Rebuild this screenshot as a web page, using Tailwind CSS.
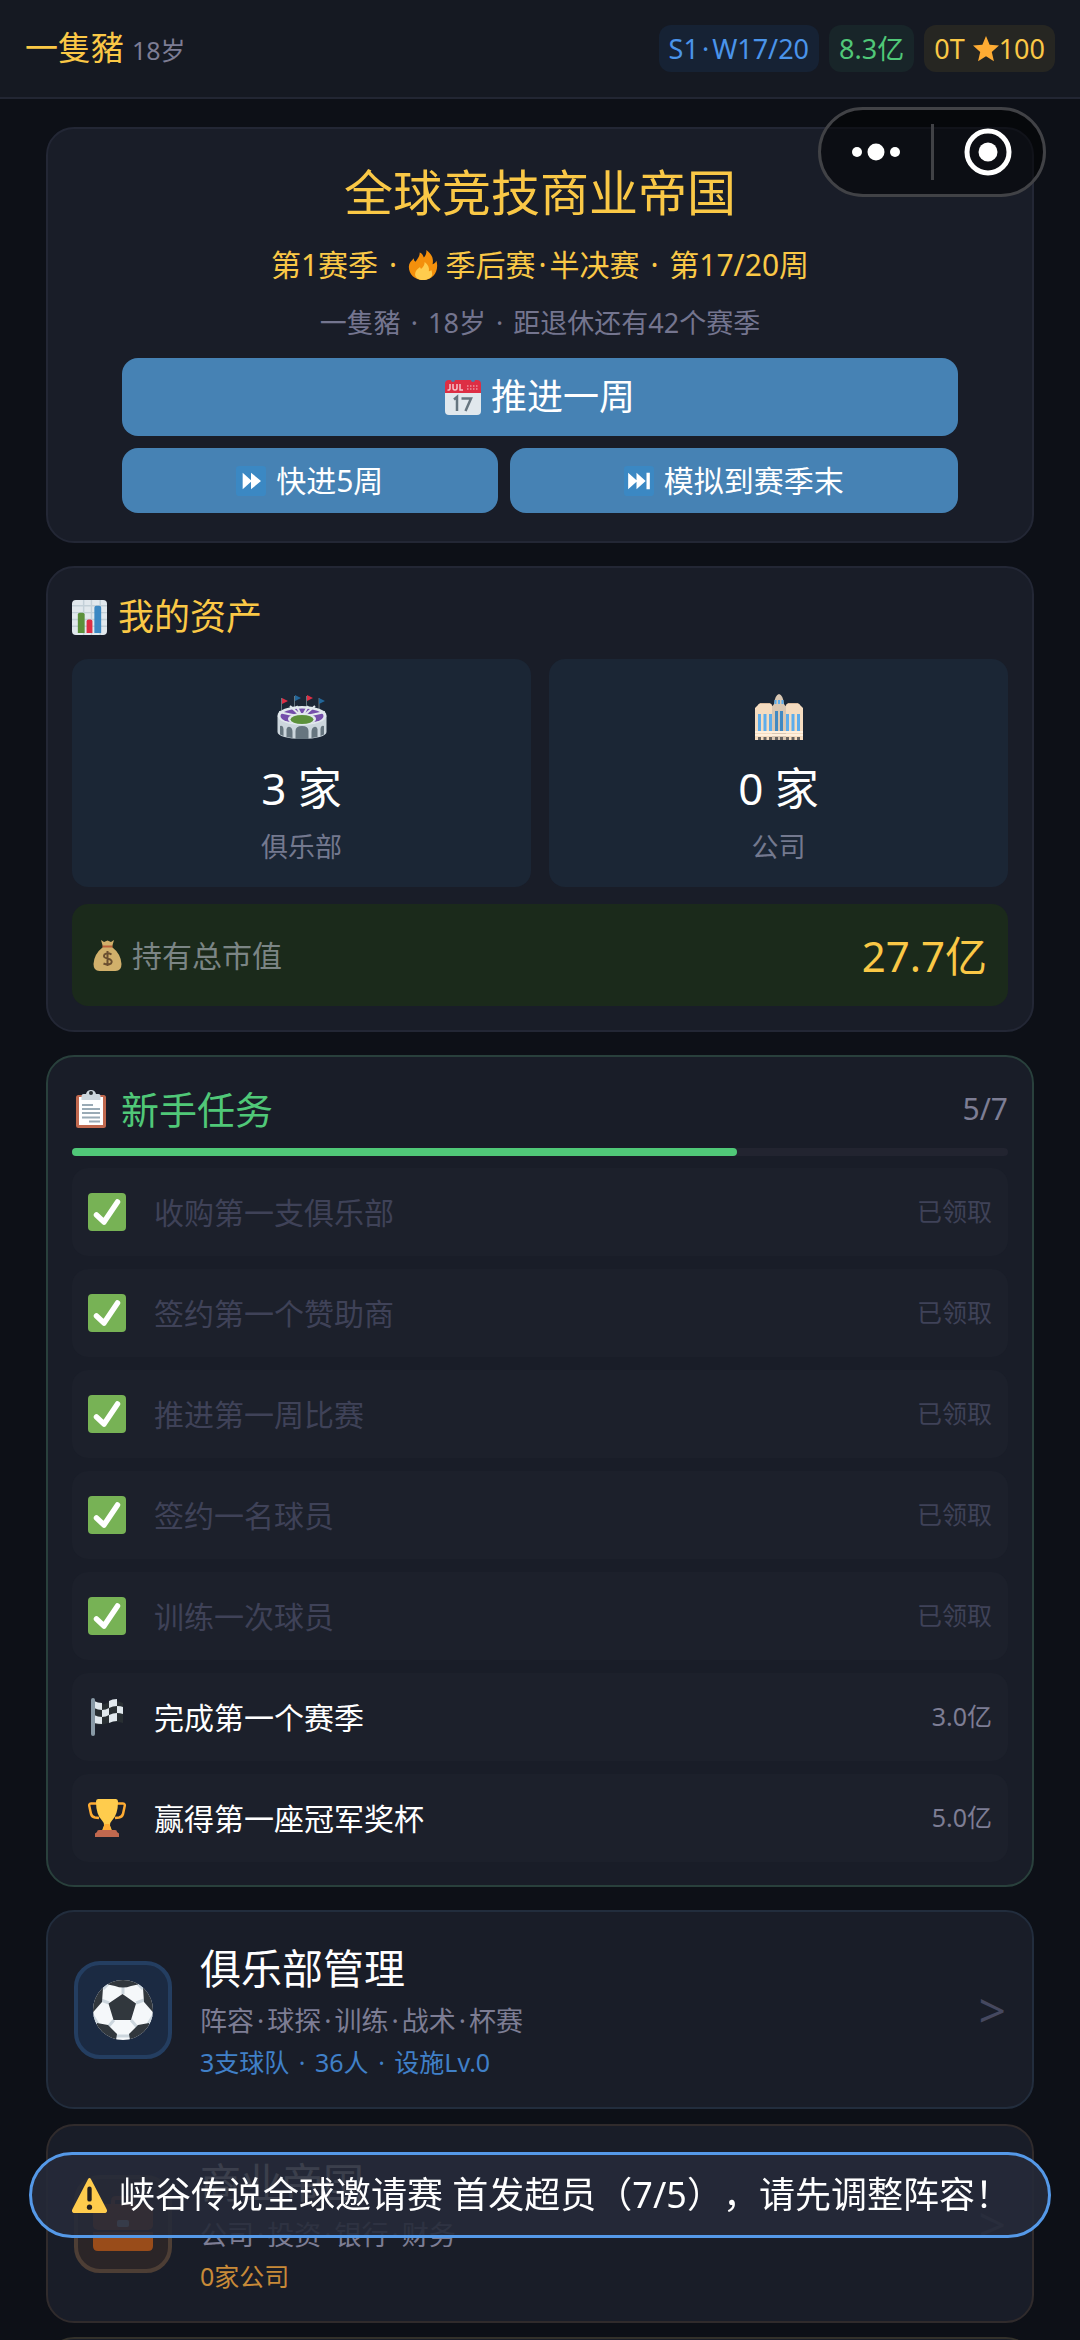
<!DOCTYPE html>
<html lang="zh-CN">

<head>
  <meta charset="UTF-8">
  <meta name="viewport" content="width=device-width, initial-scale=1.0">
  <script src="https://cdn.jsdelivr.net/npm/@tailwindcss/browser@4"></script>
  <title>全球竞技商业帝国</title>
</head>

<body class="h-screen overflow-hidden flex flex-col bg-[#0d1017] text-white font-['Noto_Sans','Noto_Sans_CJK_SC',sans-serif]">
  <!-- Shared icon -->
  <svg class="hidden">
    <symbol id="check" viewBox="0 0 38 38">
      <rect width="38" height="38" rx="4" fill="#77b255" />
      <path d="M8.500 22 L16 29 L29.500 9" fill="none" stroke="#fff" stroke-width="5.500" stroke-linecap="round" stroke-linejoin="round" />
    </symbol>
  </svg>

  <header class="flex shrink-0 items-center justify-between h-[99px] px-[25px] bg-[#151922] border-b-2 border-[#222633]">
    <div class="flex items-baseline gap-2">
      <span class="text-[33px] leading-[48px] text-[#fac846]">一隻豬</span>
      <span class="text-[25px] leading-[48px] text-[#7d7d94]">18岁</span>
    </div>
    <div class="flex gap-[10px] text-[27px] leading-[47px]">
      <span class="px-[10px] rounded-xl bg-[#162234] text-[#4a94ea]">S1<span class="mx-[3px]">·</span>W17/20</span>
      <span class="px-[10px] rounded-xl bg-[#182529] text-[#50c878]">8.3亿</span>
      <span class="flex items-center px-[10px] rounded-xl bg-[#262622] text-[#fac846]">0T
        <svg class="ml-2 size-[26px]" viewBox="0 0 36 36"><path fill="#ffac33" d="M18 0l5 12 13 1-10 9 3 13-11-7-11 7 3-13L0 13l13-1z" /></svg>100</span>
    </div>
  </header>

  <main class="px-[46px] pt-7">
    <section class="px-[74px] pt-[27px] pb-7 text-center bg-[#191d28] border-2 border-[#232735] rounded-[28px]">
      <h1 class="text-[49px] leading-[72px] text-[#fac846]">全球竞技商业帝国</h1>
      <p class="mt-[15px] text-[30px] leading-[44px] text-[#fac846]">第1赛季 <span class="mx-[3px]">·</span>
        <svg class="inline size-[30px] align-[-4px]" viewBox="0 0 36 36">
          <path fill="#f4900c" d="M35 19c0-2-.3-4-.9-6-1 2-2.600 3.600-4.600 4 1.500-7-1-12-7.500-17 .5 4-1 7-3 9-1-3-2.500-5-5-6 .3 4-2 7-5 11-1.500-.5-2-2-2-4-3 3-6 6-6 10 0 9 7 16 17 16s17-7 17-17z" />
          <path fill="#ffcc4d" d="M28 24c-1 1-2 1.500-3 1.500 1-4-1-8-5-11 0 4-2 6-4 8-1 0-1.500-1-1.500-2-3 2-6 5-6 8.500 0 4 4 7 9.500 7s11-3 11-7c0-2-.4-3.500-1-5z" />
        </svg>
        季后赛<span class="mx-[3px]">·</span>半决赛 <span class="mx-[3px]">·</span> 第17/20周</p>
      <p class="mt-[18px] text-[27px] leading-9 text-[#74758f]">一隻豬 <span class="mx-[3px]">·</span> 18岁 <span class="mx-[3px]">·</span> 距退休还有42个赛季</p>
      <button class="flex items-center justify-center gap-[10px] w-full h-[78px] mt-[17px] rounded-2xl bg-[#4682b4] text-[36px]">
        <svg class="size-9" viewBox="0 0 36 36">
          <path fill="#e1e8ed" d="M0 12h36v20a4 4 0 0 1-4 4H4a4 4 0 0 1-4-4z" />
          <path fill="#dd2e44" d="M0 14V5a4 4 0 0 1 4-4h2a2 2 0 0 0 4 0h16a2 2 0 0 0 4 0h2a4 4 0 0 1 4 4v9z" />
          <path fill="none" stroke="#f5c4cb" stroke-width="1.500" d="M5 5v4.500q0 2-2.500 1.500M8 5v4q0 2 2 2t2-2v-4M15 5v6h3" />
          <path stroke="#f5c4cb" stroke-dasharray="1.500 1.500" d="M22 7h12M22 10h12" />
          <path fill="none" stroke="#66757f" stroke-width="2.500" d="M9 20.500l3-2.500v14M16.500 19.500h9.500l-5.500 12.500" />
        </svg>
        推进一周
      </button>
      <div class="flex gap-3 mt-3 text-[30px]">
        <button class="flex grow items-center justify-center gap-[10px] h-[65px] rounded-2xl bg-[#4682b4]">
          <svg class="size-[30px]" viewBox="0 0 36 36">
            <rect width="36" height="36" rx="4" fill="#3b88c3" />
            <path fill="#fff" d="M8 8l11 10L8 28zM18 8l12 10-12 10z" />
          </svg>
          快进5周
        </button>
        <button class="flex grow items-center justify-center gap-[10px] h-[65px] rounded-2xl bg-[#4682b4]">
          <svg class="size-[30px]" viewBox="0 0 36 36">
            <rect width="36" height="36" rx="4" fill="#3b88c3" />
            <path fill="#fff" d="M5 8l11 10L5 28zM15 8l11 10-11 10zM27 8h4v20h-4z" />
          </svg>
          模拟到赛季末
        </button>
      </div>
    </section>

    <section class="mt-[23px] px-6 pt-[25px] pb-6 bg-[#191d28] border-2 border-[#232735] rounded-[28px]">
      <h2 class="flex items-center gap-[11px] text-[36px] leading-[48px] text-[#fac846]">
        <svg class="size-[35px]" viewBox="0 0 36 36">
          <rect width="36" height="36" rx="4" fill="#e1e8ed" />
          <path stroke="#c3d0d8" stroke-width="1.500" d="M0 6h36M0 13h36M0 20h36M0 27h36M12 0v36M20 0v36M29 0v36" />
          <path fill="#5c913b" d="M6 34V15a2 2 0 0 1 2-2h3a2 2 0 0 1 2 2v19z" />
          <path fill="#dd2e44" d="M15 34V22a2 2 0 0 1 2-2h2a2 2 0 0 1 2 2v12z" />
          <path fill="#3b88c3" d="M23 34V8a2 2 0 0 1 2-2h3a2 2 0 0 1 2 2v26z" />
        </svg>
        我的资产
      </h2>
      <div class="grid grid-cols-2 gap-[18px] mt-[18px] text-center">
        <div class="pt-[33px] pb-[22px] bg-[#1b2635] rounded-2xl">
          <svg class="mx-auto size-[50px]" viewBox="0 0 50 50">
            <path stroke="#66757f" d="M4.500 6v12M17.500 4v12M29.500 4v12M42 6v12" />
            <path fill="#dd2e44" d="M5 6l6 3-6 3zM30 3l6 3-6 3z" />
            <path fill="#226699" d="M18 3l6 3-6 3zM42 6l6 3-6 3z" />
            <path fill="#ccd6dd" d="M0.500 24v16c0 4 10 7 24.500 7s24.500-3 24.500-7V24z" />
            <ellipse cx="25" cy="23.500" rx="24.500" ry="9.500" fill="#e1e8ed" />
            <ellipse cx="25" cy="24" rx="21.500" ry="7.500" fill="#744eaa" />
            <path stroke="#e1e8ed" stroke-width="2" d="M25 25L2 20M25 25L13 14M25 25L19.500 14M25 25L31 14M25 25L38 14M25 25L48 20" />
            <ellipse cx="25" cy="27" rx="14" ry="6" fill="#e1e8ed" />
            <ellipse cx="25" cy="27.500" rx="11.500" ry="4.500" fill="#5c913b" />
            <path fill="#66757f" d="M18.500 47V39q0-5 6.500-5t6.500 5v8zM9.500 45V37q1-3 3.500-2t2.500 5v6zM34.500 46V40q0-4 2.500-5t3.500 2v8zM3 42.500V34q3-1 3.500 3v7zM43.500 44V37q.5-4 3.500-3v8.500z" />
          </svg>
          <p class="mt-4 text-[44px] leading-[60px]">3 家</p>
          <p class="mt-[11px] text-[27px] leading-9 text-[#74798f]">俱乐部</p>
        </div>
        <div class="pt-[33px] pb-[22px] bg-[#1b2635] rounded-2xl">
          <svg class="mx-auto size-[50px]" viewBox="0 0 50 50">
            <path fill="#d9b99b" d="M4 13l2-2h10l2 2zM32 13l2-2h10l2 2z" />
            <path fill="#f5dcc0" d="M1 48V16l4-4h12l3 4v32zM30 48V16l3-4h12l4 4v32z" />
            <path fill="#d9c7b3" d="M18 48V15l2-3q1-9 5-10 4 1 5 10l2 3v33z" />
            <path fill="#5dadec" d="M20.500 8h2v4h-2zM24 8h2v4h-2zM27.500 8h2v4h-2zM4 22h3v19H4zM9.500 22h3v19h-3zM15 22h3v19h-3zM32 22h3v19h-3zM37.500 22h3v19h-3zM43 22h3v19h-3z" />
            <path fill="#4289c1" d="M21 19h3v22h-3zM26 19h3v22h-3z" />
            <path stroke="#fff0dd" stroke-width="2" d="M1 40h48M1 43h48" />
            <path fill="#66625f" d="M4 45h3v3H4zM9.500 45h3v3h-3zM15 45h3v3h-3zM21 45h3v3h-3zM26 45h3v3h-3zM32 45h3v3h-3zM37.500 45h3v3h-3zM43 45h3v3h-3z" />
          </svg>
          <p class="mt-4 text-[44px] leading-[60px]">0 家</p>
          <p class="mt-[11px] text-[27px] leading-9 text-[#74798f]">公司</p>
        </div>
      </div>
      <div class="flex items-center justify-between h-[102px] mt-[17px] px-[21px] bg-[#1b2a1b] rounded-2xl">
        <span class="flex items-center gap-[10px] text-[30px] text-[#7b8585]">
          <svg class="w-[29px] h-[31px]" viewBox="0 0 29 31">
            <path fill="#d1b06b" d="M8 0l3 2 3.500-1.500L18 2l3-2-2 7q9 7 9.500 17 0 7-6 7h-16q-6 0-6-7Q1 14 10 7z" />
            <path stroke="#b8603a" stroke-width="2" d="M9.500 6.500h10" />
            <path fill="none" stroke="#6b4f30" stroke-width="2" d="M18.500 14.500q-4-2.500-7 0-2 3 3 4 6 1.500 3.500 5-3 2-7.500 0M14.500 11v15" />
          </svg>
          持有总市值
        </span>
        <span class="text-[42px] text-[#fac846]">27.7亿</span>
      </div>
    </section>

    <section class="mt-[23px] px-6 pt-[26px] pb-[23px] bg-[#191d28] border-2 border-[#29403c] rounded-[28px]">
      <div class="flex items-center justify-between leading-[52px]">
        <h2 class="flex items-center gap-[11px] text-[38px] text-[#50c878]">
          <svg class="size-[38px]" viewBox="0 0 38 38">
            <rect x="4" y="5" width="30" height="33" rx="2.500" fill="#c1694f" />
            <rect x="7" y="7" width="24" height="28" fill="#fff" />
            <path fill="#ccd6dd" d="M9.500 10V6q0-2 2-2H14q1-4 5-4t5 4h2.500q2 0 2 2v4z" />
            <circle cx="19" cy="3" r="2" fill="#292f33" />
            <path stroke="#99aab5" stroke-width="2" d="M10 15h11M10 19h18M10 23h18M10 27.500h18M17 31.500h11" />
          </svg>
          新手任务
        </h2>
        <span class="text-[30px] text-[#7d7d94]">5/7</span>
      </div>
      <div class="h-2 mt-[13px] rounded-full bg-[#222430]">
        <div class="h-2 rounded-full bg-[#50c878]" style="width: 71%"></div>
      </div>
      <ul class="flex flex-col gap-[13px] mt-3 text-[30px] text-[#3f4258]">
        <li class="flex items-center h-[88px] px-4 rounded-2xl bg-[#1c202b]">
          <svg class="size-[38px] mr-7"><use href="#check" /></svg>
          收购第一支俱乐部
          <span class="ml-auto text-[25px]">已领取</span>
        </li>
        <li class="flex items-center h-[88px] px-4 rounded-2xl bg-[#1c202b]">
          <svg class="size-[38px] mr-7"><use href="#check" /></svg>
          签约第一个赞助商
          <span class="ml-auto text-[25px]">已领取</span>
        </li>
        <li class="flex items-center h-[88px] px-4 rounded-2xl bg-[#1c202b]">
          <svg class="size-[38px] mr-7"><use href="#check" /></svg>
          推进第一周比赛
          <span class="ml-auto text-[25px]">已领取</span>
        </li>
        <li class="flex items-center h-[88px] px-4 rounded-2xl bg-[#1c202b]">
          <svg class="size-[38px] mr-7"><use href="#check" /></svg>
          签约一名球员
          <span class="ml-auto text-[25px]">已领取</span>
        </li>
        <li class="flex items-center h-[88px] px-4 rounded-2xl bg-[#1c202b]">
          <svg class="size-[38px] mr-7"><use href="#check" /></svg>
          训练一次球员
          <span class="ml-auto text-[25px]">已领取</span>
        </li>
        <li class="flex items-center h-[88px] px-4 rounded-2xl bg-[#1c202b] text-white">
          <svg class="size-[38px] mr-7" viewBox="0 0 38 38">
            <path fill="#292f33" d="M6 4q7 4 13 1 7-4 16 0v20q-8-3-15 0-7 3-14 1z" />
            <path fill="#e1e8ed" d="M6 3q4 2 8 2v7q-4 0-8-2zM21 3q3-2 8-2v7q-4 0-8 2zM14 12q4 0 7-2v7q-3 2-7 2zM29 8q4 0 6 1v7q-3-1-6-1zM6 17q4 2 8 2v7q-4 0-8-1zM21 17q4-2 8-2v8q-4 0-8 2z" />
            <rect x="3" y="0" width="4" height="38" rx="2" fill="#8899a6" />
          </svg>
          完成第一个赛季
          <span class="ml-auto text-[25px] text-[#7d7d94]">3.0亿</span>
        </li>
        <li class="flex items-center h-[88px] px-4 rounded-2xl bg-[#1c202b] text-white">
          <svg class="size-[38px] mr-7" viewBox="0 0 38 38">
            <path fill="none" stroke="#ffac33" stroke-width="2.500" stroke-linejoin="round" d="M9 4.500H3Q.5 4.500 1.500 8l1.500 7q1 3 4 3.500l4 .5M29 4.500h6q2.500 0 1.500 3.500l-1.500 7q-1 3-4 3.500l-4 .5" />
            <path fill="#ffcc4d" d="M10 0h18q2 0 2 2.500 0 13-6 19-2.500 2.500-2 5l2 5H14l2-5q.5-2.500-2-5-6-6-6-19Q8 0 10 0z" />
            <path fill="#ffac33" d="M16.500 25h5l1.500 6h-8z" />
            <path fill="#c1694f" d="M11 31h16q2 0 2 2l2 1.500V38H7v-3.500L9 33q0-2 2-2z" />
          </svg>
          赢得第一座冠军奖杯
          <span class="ml-auto text-[25px] text-[#7d7d94]">5.0亿</span>
        </li>
      </ul>
    </section>

    <a href="#club" class="flex items-center h-[199px] mt-[23px] px-[26px] bg-[#191d28] border-2 border-[#222d3d] rounded-[28px]">
      <span class="flex items-center justify-center size-[98px] bg-[#1b2a42] border-4 border-[#243e61] rounded-[26px]">
        <svg class="size-[60px]" viewBox="0 0 60 60">
          <defs><clipPath id="ball"><circle cx="30" cy="30" r="30" /></clipPath></defs>
          <g clip-path="url(#ball)">
            <rect width="60" height="60" fill="#f5f8fa" />
            <path stroke="#ccd6dd" stroke-width="3" d="M30 14V6M43 23l8-3M38 40l6 7M21 40l-6 7M16 23l-8-3M0 36l5 8M60 36l-5 8M20 56h20M10 9l5-5M50 9l-5-5" />
            <path fill="#31373d" d="M29.500 14L43 23.500 38 40H20.500L15.500 23.500zM15 0h30v4.500L38 6q-8 3-16 0l-7-1.500zM0 6h8l2 2-1 14-7 8-4 5zM60 6h-8l-2 2 1 14 7 8 4 5zM4 43l11 2 9 9-1 6H4zM56 43l-11 2-9 9 1 6h19z" />
          </g>
        </svg>
      </span>
      <span class="flex flex-col ml-7">
        <span class="text-[41px] leading-[56px]">俱乐部管理</span>
        <span class="mt-[5px] text-[27px] leading-10 text-[#7d7d94]">阵容<span class="mx-[3px]">·</span>球探<span class="mx-[3px]">·</span>训练<span class="mx-[3px]">·</span>战术<span class="mx-[3px]">·</span>杯赛</span>
        <span class="mt-[3px] text-[25px] leading-9 text-[#4080c8]">3支球队 <span class="mx-[3px]">·</span> 36人 <span class="mx-[3px]">·</span> 设施Lv.0</span>
      </span>
      <span class="ml-auto text-[48px] text-[#45485f]">&gt;</span>
    </a>

    <a href="#business" class="flex items-center h-[199px] mt-[15px] px-[26px] bg-[#191d28] border-2 border-[#302b2c] rounded-[28px]">
      <span class="flex items-center justify-center size-[98px] bg-[#2b2527] border-4 border-[#4d3e35] rounded-[26px]">
        <svg class="size-[60px]" viewBox="0 0 60 60">
          <path fill="none" stroke="#8a4b28" stroke-width="4" d="M20 12V7q0-3 3-3h14q3 0 3 3v5" />
          <rect y="10" width="60" height="26" rx="5" fill="#a34b1c" />
          <path fill="#994c1a" d="M0 38h60v14q0 5-5 5H5q-5 0-5-5z" />
          <rect x="24" y="26" width="12" height="7" rx="2" fill="#ccd6dd" />
        </svg>
      </span>
      <span class="flex flex-col ml-7">
        <span class="text-[41px] leading-[56px]">商业帝国</span>
        <span class="mt-[5px] text-[27px] leading-10 text-[#7d7d94]">公司<span class="mx-[3px]">·</span>投资<span class="mx-[3px]">·</span>银行<span class="mx-[3px]">·</span>财务</span>
        <span class="mt-[3px] text-[25px] leading-9 text-[#c88a38]">0家公司</span>
      </span>
      <span class="ml-auto text-[48px] text-[#45485f]">&gt;</span>
    </a>

    <div class="h-[199px] mt-[14px] bg-[#191d28] border-2 border-[#33312b] rounded-[28px]"></div>
  </main>

  <!-- Mini program capsule -->
  <div class="fixed top-[107px] right-[34px] flex items-center w-[228px] h-[90px] rounded-full bg-black/50 border-3 border-[#414246]">
    <button class="flex flex-1 items-center justify-center" aria-label="更多">
      <svg class="w-[50px] h-5" viewBox="0 0 50 20" fill="#fff">
        <circle cx="6" cy="10" r="5" /><circle cx="25" cy="10" r="8.500" /><circle cx="44" cy="10" r="5" />
      </svg>
    </button>
    <div class="w-[3px] h-14 bg-[#414246]"></div>
    <button class="flex flex-1 items-center justify-center" aria-label="关闭">
      <svg class="size-12" viewBox="0 0 48 48">
        <circle cx="24" cy="24" r="21" fill="none" stroke="#fff" stroke-width="5" />
        <circle cx="24" cy="24" r="9.500" fill="#fff" />
      </svg>
    </button>
  </div>

  <!-- Toast -->
  <div role="alert" class="fixed bottom-[102px] inset-x-[29px] flex items-center gap-3 h-[86px] pl-10 rounded-full bg-[#262a38]/90 border-3 border-[#5599e8] text-[36px] whitespace-nowrap [text-spacing-trim:space-all]">
    <svg class="size-[35px] shrink-0" viewBox="0 0 36 36">
      <path fill="#ffcc4d" d="M2.700 36C.2 36-.7 34.200.500 32L16.300 1.500q1.700-3 3.400 0L35.500 32c1.200 2.200.3 4-2.200 4z" />
      <path stroke="#231f20" stroke-width="4.500" stroke-linecap="round" d="M18 11v11" />
      <circle cx="18" cy="30" r="2.700" fill="#231f20" />
    </svg>
    峡谷传说全球邀请赛 首发超员（7/5），请先调整阵容！
  </div>
</body>

</html>
